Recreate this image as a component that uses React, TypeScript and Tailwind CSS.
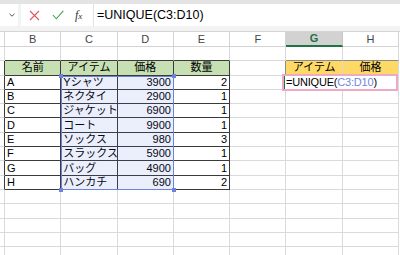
import React from "react";

const COLS = ["B", "C", "D", "E", "F", "G", "H"];
const ROW_H = "h-[14.3px]";

const items: [string, string, number, number][] = [
  ["A", "Yシャツ", 3900, 2],
  ["B", "ネクタイ", 2900, 1],
  ["C", "ジャケット", 6900, 1],
  ["D", "コート", 9900, 1],
  ["E", "ソックス", 980, 3],
  ["F", "スラックス", 5900, 1],
  ["G", "バッグ", 4900, 1],
  ["H", "ハンカチ", 690, 2],
];

function FormulaBar() {
  return (
    <div className="flex h-[31px] flex-col bg-[#f3f3f3]">
      <div className="h-[4px] bg-[#e4e4e4]" />
      <div className="flex h-[22px] items-stretch">
        <div className="flex w-[18px] items-center justify-end bg-white pr-[3px]">
          <svg width="6" height="4" viewBox="0 0 6 4">
            <path d="M0.5 0.8 L3 3.2 L5.5 0.8" fill="none" stroke="#555" strokeWidth="1" />
          </svg>
        </div>
        <div className="w-[3px]" />
        <div className="flex w-[72px] items-center bg-white">
          <svg className="ml-[8px]" width="11" height="11" viewBox="0 0 11 11">
            <path d="M1 1 L10 10 M10 1 L1 10" stroke="#e0555a" strokeWidth="1.1" />
          </svg>
          <svg className="ml-[12px]" width="12" height="10" viewBox="0 0 12 10">
            <path d="M0.8 5 L4.3 8.8 L11.3 0.8" fill="none" stroke="#3fa34d" strokeWidth="1.1" />
          </svg>
          <span className="ml-[11px] font-['Liberation_Serif',serif] text-[12px] italic text-[#333]">
            f<span className="text-[9px]">x</span>
          </span>
        </div>
        <div className="flex flex-1 items-center border-l border-[#e2e2e2] bg-white pl-[3px] font-['Liberation_Sans',sans-serif] text-[12.5px] text-black">
          =UNIQUE(C3:D10)
        </div>
      </div>
    </div>
  );
}

function ColumnHeader() {
  return (
    <div className="flex h-[16px] border-t border-[#d4d4d4] bg-white font-['Liberation_Sans',sans-serif] text-[11px]">
      <div className="w-[5px] border-r border-b border-[#d4d4d4]" />
      {COLS.map((c) => (
        <div
          key={c}
          className={
            c === "G"
              ? "flex w-[56.3px] items-center justify-center border-r border-b-2 border-r-[#c6c6c6] border-b-[#217346] bg-[#d2d2d2] font-bold text-[#217346]"
              : "flex w-[56.3px] items-center justify-center border-r border-b border-[#d4d4d4] text-[#444]"
          }
        >
          {c}
        </div>
      ))}
    </div>
  );
}

type CellProps = {
  children?: React.ReactNode;
  table?: boolean;
  bg?: string;
  align?: "left" | "right" | "center";
};

function Cell({ children, table, bg, align = "left" }: CellProps) {
  const base = "flex w-[56.3px] items-center overflow-hidden whitespace-nowrap border-r border-b px-[2px]";
  const border = table ? "border-[#3a3a3a]" : "border-[#dadada]";
  const al = align === "right" ? "justify-end" : align === "center" ? "justify-center" : "justify-start";
  return <div className={`${base} ${border} ${al} ${bg ?? ""}`}>{children}</div>;
}

function Row({ children, tableStart }: { children: React.ReactNode; tableStart?: boolean }) {
  return (
    <div className={`flex ${ROW_H}`}>
      <div className={`w-[5px] border-r border-b ${tableStart ? "border-r-[#3a3a3a]" : "border-r-[#dadada]"} border-b-[#dadada]`} />
      {children}
    </div>
  );
}

export default function App() {
  return (
    <div className="h-[255px] w-[400px] overflow-hidden bg-white font-['Liberation_Sans','Noto_Sans_CJK_JP',sans-serif] text-[11px] leading-none text-black">
      <FormulaBar />
      <div className="relative">
        <ColumnHeader />
        {/* row 1 */}
        <div className={`flex ${ROW_H}`}>
          <div className="w-[5px] border-r border-b border-[#dadada]" />
          {COLS.map((c, i) => (
            <div
              key={c}
              className={`w-[56.3px] border-r border-b ${
                i < 4 ? "border-r-[#dadada] border-b-[#3a3a3a]" : i > 4 ? "border-r-[#dadada] border-b-[#8a8a8a]" : "border-[#dadada]"
              }`}
            />
          ))}
        </div>
        {/* row 2: headers */}
        <Row tableStart>
          <Cell table bg="bg-[#c6e0b4]" align="center">名前</Cell>
          <Cell table bg="bg-[#c6e0b4]" align="center">アイテム</Cell>
          <Cell table bg="bg-[#c6e0b4]" align="center">価格</Cell>
          <Cell table bg="bg-[#c6e0b4]" align="center">数量</Cell>
          <Cell bg="border-r-[#8a8a8a]" />
          <Cell bg="bg-[#ffd966] border-[#8a8a8a]" align="center">アイテム</Cell>
          <Cell bg="bg-[#ffd966] border-[#8a8a8a]" align="center">価格</Cell>
        </Row>
        {items.map(([name, item, price, qty]) => (
          <Row key={name} tableStart>
            <Cell table>{name}</Cell>
            <Cell table>{item}</Cell>
            <Cell table align="right">{price}</Cell>
            <Cell table align="right">{qty}</Cell>
            <Cell />
            <Cell />
            <Cell />
          </Row>
        ))}
        {[0, 1, 2, 3, 4].map((r) => (
          <Row key={r}>
            {COLS.map((c) => (
              <Cell key={c} />
            ))}
          </Row>
        ))}

        {/* selection C3:D10 */}
        <div className="pointer-events-none absolute left-[61px] top-[44.6px] h-[114.4px] w-[112.6px] border border-[#6f82d9] bg-[#3f5bd6]/10">
          <div className="absolute -left-[3px] -top-[3px] h-[4px] w-[4px] bg-[#6f82d9]" />
          <div className="absolute -right-[3px] -top-[3px] h-[4px] w-[4px] bg-[#6f82d9]" />
          <div className="absolute -left-[3px] -bottom-[3px] h-[4px] w-[4px] bg-[#6f82d9]" />
          <div className="absolute -right-[3px] -bottom-[3px] h-[4px] w-[4px] bg-[#6f82d9]" />
        </div>

        {/* editing G3 */}
        <div className="absolute left-[282px] top-[43px] flex h-[17px] w-[116px] items-center border-2 border-[#eea8c8] bg-white">
          <div className="flex h-full items-center border-l border-[#217346] pl-[1px] text-[11px] tracking-[-0.2px]">
            <span>=UNIQUE(</span>
            <span className="text-[#6f86dc]">C3:D10</span>
            <span>)</span>
          </div>
        </div>
      </div>
    </div>
  );
}
